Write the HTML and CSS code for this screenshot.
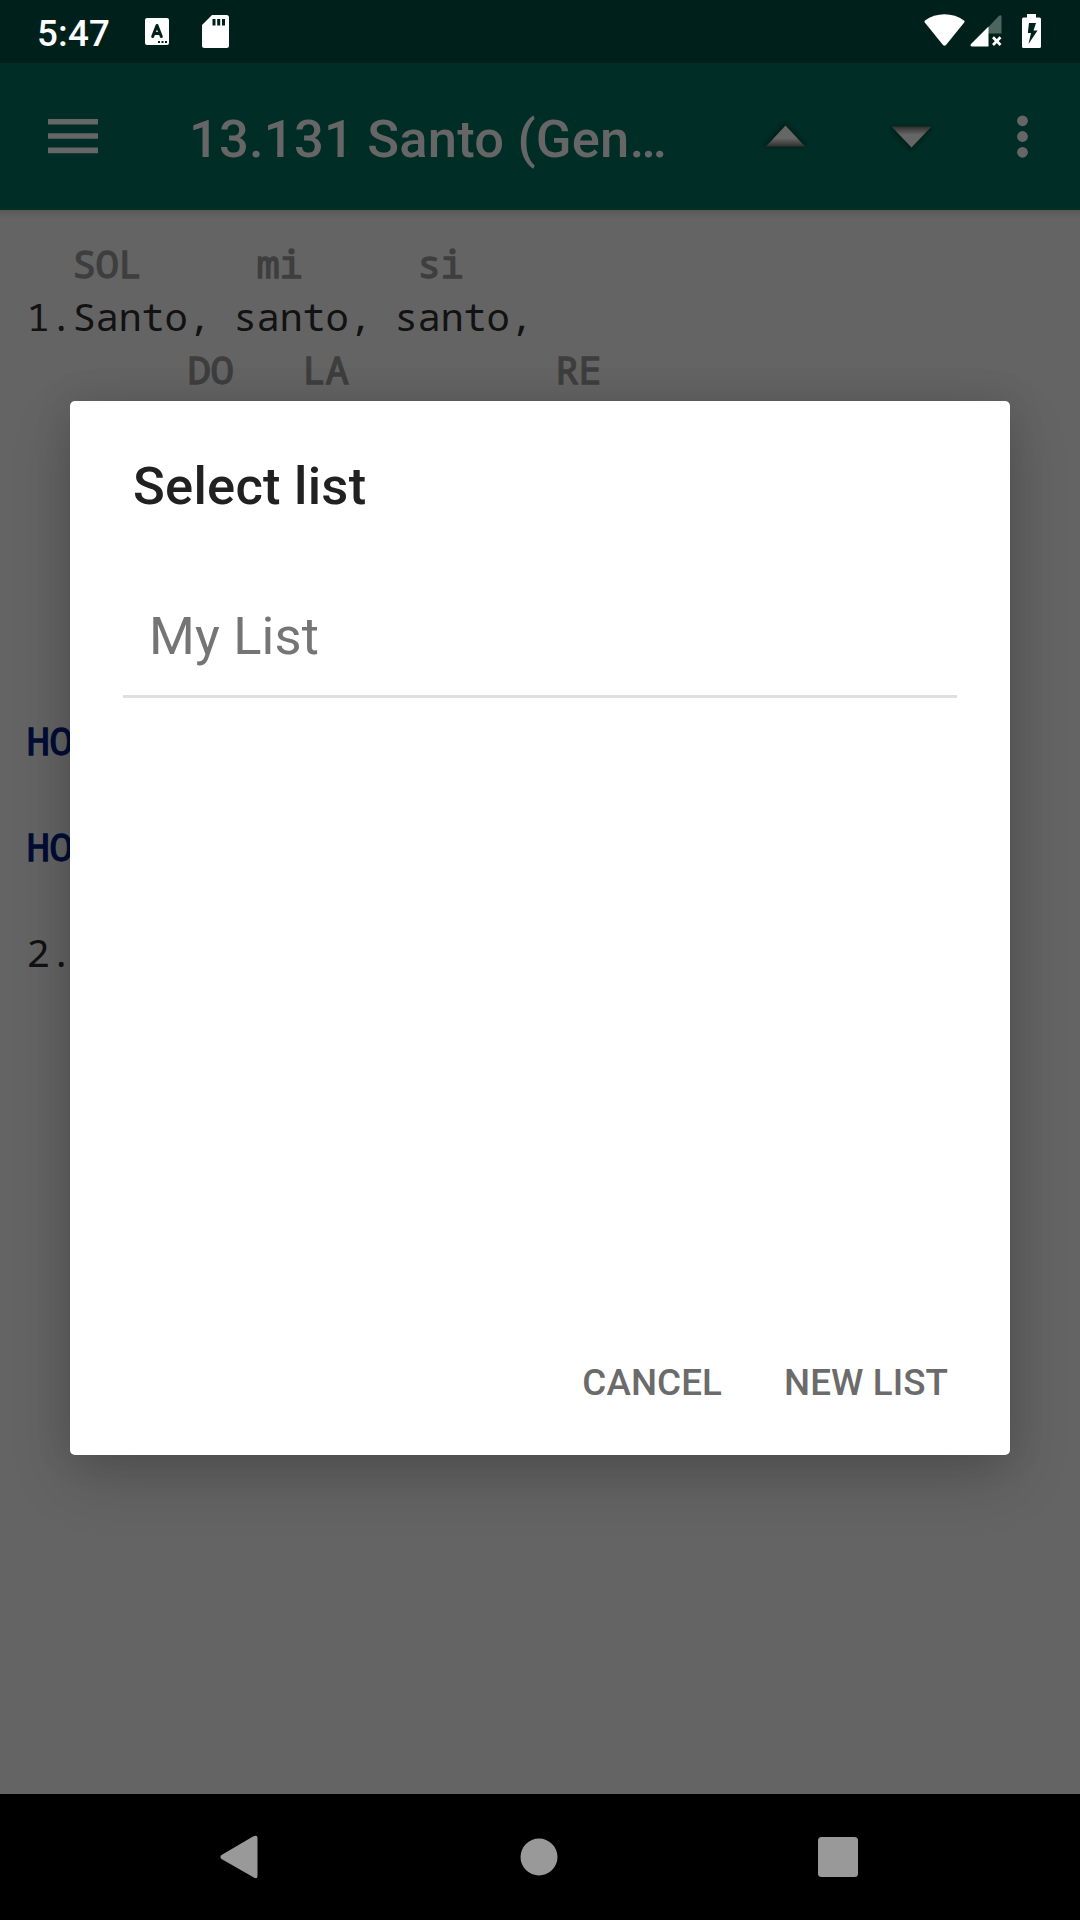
FILE: index.html
```html
<!DOCTYPE html>
<html lang="en">
<head>
<meta charset="utf-8">
<title>Select list</title>
<link rel="stylesheet" href="styles.css">
</head>
<body>
<div class="screen">
  <header class="status">
    <span class="clock">5:47</span>
    <svg class="status-icon keyboard" width="24" height="27" viewBox="0 0 24 27"><path fill="#fff" fill-rule="evenodd" d="M2 0H22a2 2 0 0 1 2 2V25a2 2 0 0 1-2 2H2a2 2 0 0 1-2-2V2a2 2 0 0 1 2-2ZM13 23v2h2v-2ZM16.500 23v2h2v-2ZM20 23v2h2v-2Z"/><path d="M7.700 18.500 12 7.500 16.300 18.500M9 15.500H15" fill="none" stroke="#00211b" stroke-width="3" stroke-linecap="round" stroke-linejoin="round"/></svg>
    <svg class="status-icon card" width="27" height="33" viewBox="0 0 27 33"><path fill="#fff" fill-rule="evenodd" d="M10 0H24.500A2.500 2.500 0 0 1 27 2.500V30.500A2.500 2.500 0 0 1 24.500 33H2.500A2.500 2.500 0 0 1 0 30.500V10ZM10.500 4v6.500h3V4ZM15.200 4v6.500h3V4ZM20 4v6.500h3V4Z"/></svg>
    <svg class="status-icon wifi" width="41" height="33" viewBox="0 0 41 33"><path fill="#fff" d="M1 6.500C12-1.800 29-1.800 40 6.500Q41 7.300 40.200 8.600L22 31Q20.500 32.500 19 31L.8 8.600Q0 7.300 1 6.500Z"/></svg>
    <svg class="status-icon signal" width="32" height="32" viewBox="0 0 32 32"><path fill="#4d645f" d="M18 12.500 29 .8Q31.500-.8 31.500 2V18.500H18Z"/><path fill="#fff" d="M18.500 11.500V31.500H2Q-.5 31 1 29Z"/><path d="M23 22.200 30.500 30M30.500 22.200 23 30" stroke="#fff" stroke-width="2.700"/></svg>
    <svg class="status-icon battery" width="19" height="34" viewBox="0 0 19 34"><path fill="#fff" fill-rule="evenodd" d="M5 0H14V3.500H17.500Q19 3.500 19 5V32.500Q19 34 17.500 34H1.500Q0 34 0 32.500V5Q0 3.500 1.500 3.500H5ZM7 9 5.800 19H9L6.500 30 15.500 16.500H11.500L14 9Z"/></svg>
  </header>
  <nav class="toolbar">
    <svg class="menu" width="50" height="35" viewBox="0 0 50 35"><path fill="#666" d="M0 0H50V5.500H0ZM0 14.300H50V19.800H0ZM0 28.500H50V34.300H0Z"/></svg>
    <h1 class="song-title">13.131 Santo (Gen…</h1>
    <svg class="arrow up" width="50" height="36" viewBox="0 0 50 36">
      <defs>
        <linearGradient id="fadeDown" x1="0" y1="0" x2="0" y2="1"><stop offset=".6" stop-color="#666"/><stop offset="1" stop-color="#302f2e"/></linearGradient>
        <linearGradient id="fadeUp" x1="0" y1="1" x2="0" y2="0"><stop offset=".6" stop-color="#666"/><stop offset="1" stop-color="#302f2e"/></linearGradient>
        <filter id="soft" x="-30%" y="-40%" width="160%" height="180%"><feGaussianBlur stdDeviation="2"/></filter>
      </defs>
      <path fill="#001a13" filter="url(#soft)" d="M25 5 45 27H5Z"/><path fill="url(#fadeDown)" d="M25.500 7.500 45 28.500H6Z"/>
    </svg>
    <svg class="arrow down" width="50" height="36" viewBox="0 0 50 36"><path fill="#001a13" filter="url(#soft)" d="M25 32 45 10H5Z"/><path fill="url(#fadeUp)" d="M25.500 29.500 45.500 8.500H5.500Z"/></svg>
    <svg class="more" width="12" height="44" viewBox="0 0 12 44"><g fill="#666"><circle cx="5.500" cy="5.800" r="5.400"/><circle cx="5.500" cy="21.500" r="5.400"/><circle cx="5.500" cy="37.300" r="5.400"/></g></svg>
  </nav>
  <main class="lyrics">
<pre class="song"><span class="chord">  SOL     mi     si</span>
1.Santo, santo, santo,
<span class="chord">       DO   LA         RE</span>






<span class="refrain">HO</span>

<span class="refrain">HO</span>

2.</pre>
  </main>
  <footer class="navbar">
    <svg width="38" height="44" viewBox="0 0 38 44"><path fill="#999" d="M33 1.500Q37.500-.8 37.500 3V41Q37.500 45 33 42L1.500 24Q-.8 22 1.500 20Z"/></svg>
    <svg class="home" width="38" height="38" viewBox="0 0 38 38"><circle cx="19" cy="19" r="18.500" fill="#999"/></svg>
    <svg width="40" height="40" viewBox="0 0 40 40"><rect width="40" height="40" rx="3.500" fill="#999"/></svg>
  </footer>
  <div class="overlay">
    <section class="dialog">
      <h2 class="dialog-title">Select list</h2>
      <div class="field">My List</div>
      <div class="actions"><span class="action">CANCEL</span><span class="action">NEW LIST</span></div>
    </section>
  </div>
</div>
</body>
</html>
```
FILE: styles.css
```css
* { box-sizing: border-box; }
body { margin: 0; font-family: Roboto, sans-serif; }
svg { display: block; flex: none; }
.screen {
  position: relative;
  width: 1080px;
  height: 1920px;
  display: flex;
  flex-direction: column;
  overflow: hidden;
  background: #646464;
}
.status {
  height: 63px;
  display: flex;
  align-items: flex-start;
  background: #00211b;
  color: #fff;
  padding: 0 39px 0 37px;
}
.clock {
  width: 108px;
  font-size: 36.75px;
  font-weight: 500;
  line-height: 67px;
  letter-spacing: .2px;
}
.keyboard { margin-top: 18px; }
.card { margin: 15px 0 0 33px; }
.wifi { margin: 14px 0 0 auto; }
.signal { margin: 15px 0 0 5px; }
.battery { margin: 14px 0 0 20px; }
.toolbar {
  height: 147px;
  flex: none;
  display: flex;
  align-items: flex-start;
  background: #002d26;
  padding-left: 48px;
}
.menu { margin-top: 56px; }
.song-title {
  width: 480px;
  margin: 0 0 0 91px;
  font-size: 52.5px;
  font-weight: 500;
  line-height: 152px;
  letter-spacing: .2px;
  color: #666;
  white-space: nowrap;
}
.arrow { margin-top: 55px; }
.up { margin-left: 91px; }
.down { margin-left: 76px; }
.more { margin: 52px 0 0 81px; }
.lyrics {
  flex: 1;
  padding: 26px 26.5px;
  background: linear-gradient(#5a5a5a, #646464 9px);
}
.song {
  margin: 0;
  font-family: "Droid Sans Mono", "Noto Sans Mono", "DejaVu Sans Mono", monospace;
  font-size: 39px;
  letter-spacing: -.4px;
  line-height: 53px;
  color: #121212;
}
.chord { color: #3e3e3e; -webkit-text-stroke: 1.3px #3e3e3e; }
.refrain { color: #000d35; -webkit-text-stroke: 1.3px #000d35; }
.navbar {
  height: 126px;
  flex: none;
  display: flex;
  align-items: center;
  justify-content: space-between;
  background: #000;
  padding: 0 222px 1px 220px;
}
.home { margin-left: 2px; }
.overlay {
  position: absolute;
  inset: 63px 0 127px;
  display: flex;
  align-items: center;
  justify-content: center;
}
.dialog {
  width: 940px;
  height: 1054px;
  display: flex;
  flex-direction: column;
  background: #fff;
  border-radius: 5px;
  box-shadow: 0 24px 60px rgba(0, 0, 0, .18), 0 0 38px rgba(0, 0, 0, .11);
  padding: 47px 53px 0;
}
.dialog-title {
  margin: 0;
  padding-left: 10px;
  font-size: 52.5px;
  font-weight: 500;
  line-height: 76px;
  letter-spacing: .25px;
  color: #212121;
}
.field {
  margin-top: 48px;
  height: 126px;
  padding-left: 26px;
  border-bottom: 3px solid #e0e0e0;
  font-size: 52.5px;
  line-height: 128px;
  letter-spacing: .15px;
  color: #757575;
}
.actions {
  margin-top: auto;
  display: flex;
  justify-content: flex-end;
  gap: 62px;
  padding: 0 9px 41px 0;
}
.action {
  font-size: 36.75px;
  font-weight: 500;
  line-height: 63px;
  letter-spacing: .1px;
  color: #6b6b6b;
}
```
